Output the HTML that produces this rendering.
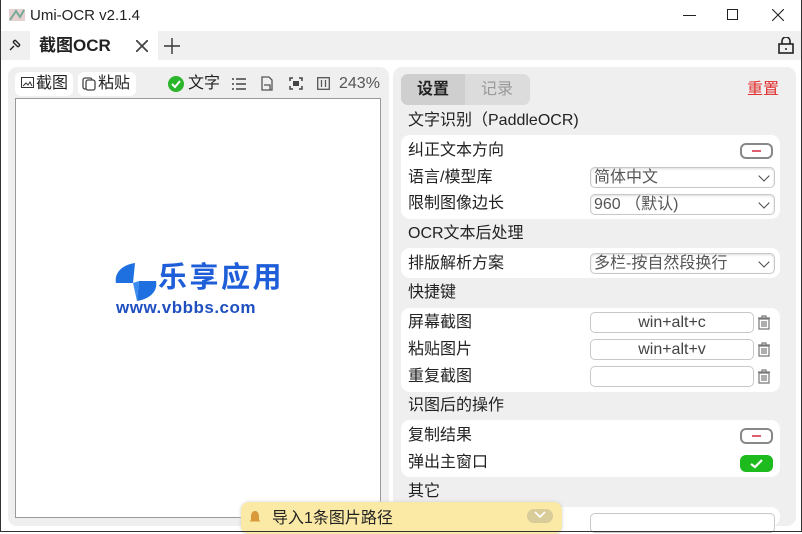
<!DOCTYPE html>
<html><head><meta charset="utf-8"><style>
*{margin:0;padding:0;box-sizing:border-box}
body{width:802px;height:532px;overflow:hidden;background:#fff;font-family:"Liberation Sans","Noto Sans CJK SC",sans-serif;color:#222;position:relative;font-size:16px}
.a{position:absolute}
.t{position:absolute;white-space:nowrap;line-height:20px}
.card{position:absolute;left:401px;width:379px;background:#fff;border-radius:9px}
.sel{position:absolute;left:590px;width:185px;height:21px;border:1px solid #c8c8c8;border-radius:5px;background:#fff;box-shadow:inset 0 1px 2px #ddd;color:#555;padding-left:3px;line-height:19px;font-size:16px}
.sel:after{content:"";position:absolute;right:6px;top:4px;width:7px;height:7px;border-right:1.6px solid #444;border-bottom:1.6px solid #444;transform:rotate(45deg)}
.inp{position:absolute;left:590px;width:164px;height:21px;border:1px solid #c8c8c8;border-radius:5px;background:#fff;text-align:center;color:#444;line-height:19px;font-size:16px}
.sw{position:absolute;left:740px;width:33px;height:16px;border:2px solid #888;border-radius:6px;background:#fff}
.sw:after{content:"";position:absolute;left:10px;top:5px;width:9px;height:2px;background:#e06070}
.trash{position:absolute;left:757px;width:14px;height:15px}
</style></head><body>
<svg class="a" style="left:8px;top:7px" width="18" height="16"><rect x="1" y="2" width="16" height="12" fill="#e7d0d0"/><path d="M2 13 L8 4 L12 10 L16 3" stroke="#7a9" stroke-width="2" fill="none"/></svg>
<div class="t" style="left:30px;top:6px;font-size:15px">Umi-OCR v2.1.4</div>
<div class="a" style="left:683px;top:15px;width:13px;height:1px;background:#222"></div>
<div class="a" style="left:727px;top:9px;width:11px;height:11px;border:1px solid #222"></div>
<svg class="a" style="left:772px;top:9px" width="12" height="12"><path d="M0 0L12 12M12 0L0 12" stroke="#222" stroke-width="1.1"/></svg>
<div class="a" style="left:0;top:31px;width:802px;height:29px;background:#f0f0f0"></div>
<div class="a" style="left:30px;top:31px;width:128px;height:29px;background:#fff"></div>
<svg class="a" style="left:8px;top:38px" width="14" height="14"><path d="M2 12L6 8M5 4L10 9M7 2L12 7M5 4L7 2M10 9L12 7" stroke="#222" stroke-width="1.4" fill="none"/></svg>
<div class="t" style="left:39px;top:36px;font-size:17px;font-weight:bold">截图OCR</div>
<svg class="a" style="left:136px;top:40px" width="12" height="12"><path d="M0 0L12 12M12 0L0 12" stroke="#444" stroke-width="1.8"/></svg>
<svg class="a" style="left:164px;top:38px" width="16" height="16"><path d="M8 0V16M0 8H16" stroke="#333" stroke-width="1.4"/></svg>
<svg class="a" style="left:778px;top:37px" width="16" height="17"><path d="M4 7V4a4 4 0 0 1 8 0v3" stroke="#222" stroke-width="1.6" fill="none"/><rect x="1" y="7" width="14" height="9" stroke="#222" stroke-width="1.6" fill="none"/><circle cx="8" cy="12" r="1" fill="#222"/></svg>
<div class="a" style="left:8px;top:67px;width:381px;height:459px;background:#efefef;border-radius:9px"></div>
<div class="a" style="left:15px;top:72px;width:58px;height:24px;background:#fff;border-radius:6px"></div>
<div class="a" style="left:78px;top:72px;width:58px;height:24px;background:#fff;border-radius:6px"></div>
<svg class="a" style="left:21px;top:77px" width="13" height="12"><rect x="0.5" y="0.5" width="12" height="10" stroke="#333" fill="none"/><path d="M2 9L5 6L7 8L9 5L11 9" stroke="#333" fill="none"/></svg>
<div class="t" style="left:36px;top:74px">截图</div>
<svg class="a" style="left:82px;top:76px" width="14" height="15"><rect x="1" y="2" width="9" height="11" rx="2" stroke="#444" fill="none" stroke-width="1.3"/><rect x="4" y="4" width="9" height="10" rx="2" stroke="#444" fill="#fff" stroke-width="1.3"/></svg>
<div class="t" style="left:98px;top:74px">粘贴</div>
<div class="a" style="left:168px;top:76px;width:16px;height:16px;border-radius:50%;background:#2ab52a"></div>
<svg class="a" style="left:171px;top:79px" width="10" height="10"><path d="M1 5L4 8L9 2" stroke="#fff" stroke-width="2" fill="none"/></svg>
<div class="t" style="left:188px;top:74px">文字</div>
<svg class="a" style="left:232px;top:78px" width="14" height="12"><path d="M0 1H2M4 1H14M0 6H2M4 6H14M0 11H2M4 11H14" stroke="#444" stroke-width="1.5"/></svg>
<svg class="a" style="left:261px;top:76px" width="12" height="15"><path d="M1 1H8L11 4V14H1Z M3 9H9V14" stroke="#555" stroke-width="1.3" fill="none"/></svg>
<svg class="a" style="left:289px;top:77px" width="14" height="13"><path d="M1 4V1H4M10 1H13V4M13 9V12H10M4 12H1V9" stroke="#444" stroke-width="1.5" fill="none"/><rect x="4" y="4" width="6" height="5" fill="#444"/></svg>
<svg class="a" style="left:317px;top:77px" width="13" height="13"><rect x="0.7" y="0.7" width="11.6" height="11.6" stroke="#555" fill="none" stroke-width="1.3"/><path d="M4.5 3V10M8.5 3V10" stroke="#555" stroke-width="1.3"/></svg>
<div class="t" style="left:339px;top:74px;color:#555">243%</div>
<div class="a" style="left:15px;top:98px;width:366px;height:420px;background:#fff;border:1px solid #999"></div>
<svg class="a" style="left:113px;top:262px" width="46" height="40"><path d="M22 1 C8 3 1 12 3 21 L20 21 Z" fill="#1e6fe0"/><path d="M24 39 C38 37 45 28 43 19 L26 19 Z" fill="#1e6fe0"/><path d="M20 21 L26 19 L24 39 Z" fill="#3a8cf0"/></svg>
<div class="t" style="left:158px;top:262px;font-size:29px;line-height:32px;font-weight:bold;color:#1e5ed8;letter-spacing:2.5px">乐享应用</div>
<div class="t" style="left:116px;top:298px;font-size:17px;font-weight:bold;color:#1f4fc0;letter-spacing:0.5px">www.vbbbs.com</div>
<div class="a" style="left:393px;top:67px;width:403px;height:459px;background:#efefef;border-radius:9px"></div>
<div class="a" style="left:401px;top:74px;width:129px;height:31px;background:#dcdcdc;border-radius:7px"></div>
<div class="a" style="left:401px;top:74px;width:64px;height:31px;background:#cfcfcf;border-radius:7px 0 0 7px"></div>
<div class="t" style="left:417px;top:80px;font-weight:bold">设置</div>
<div class="t" style="left:481px;top:80px;color:#999">记录</div>
<div class="t" style="left:747px;top:80px;color:#e03030">重置</div>
<div class="t" style="left:408px;top:111px">文字识别（PaddleOCR)</div>
<div class="card" style="top:135px;height:84px"></div>
<div class="t" style="left:408px;top:141px">纠正文本方向</div>
<div class="sw" style="top:143px"></div>
<div class="t" style="left:408px;top:168px">语言/模型库</div>
<div class="sel" style="top:167px">简体中文</div>
<div class="t" style="left:408px;top:194px">限制图像边长</div>
<div class="sel" style="top:194px">960 （默认)</div>
<div class="t" style="left:408px;top:224px">OCR文本后处理</div>
<div class="card" style="top:248px;height:30px"></div>
<div class="t" style="left:408px;top:254px">排版解析方案</div>
<div class="sel" style="top:253px">多栏-按自然段换行</div>
<div class="t" style="left:408px;top:283px">快捷键</div>
<div class="card" style="top:308px;height:84px"></div>
<div class="t" style="left:408px;top:313px">屏幕截图</div>
<div class="inp" style="top:312px">win+alt+c</div>
<div class="t" style="left:408px;top:340px">粘贴图片</div>
<div class="inp" style="top:339px">win+alt+v</div>
<div class="t" style="left:408px;top:367px">重复截图</div>
<div class="inp" style="top:366px"></div>
<svg class="trash" style="top:315px" viewBox="0 0 14 15"><path d="M1 3H13M5 3V1H9V3M2 4H12V14H2Z M5 6V12M7 6V12M9 6V12" stroke="#777" stroke-width="1.2" fill="none"/></svg>
<svg class="trash" style="top:342px" viewBox="0 0 14 15"><path d="M1 3H13M5 3V1H9V3M2 4H12V14H2Z M5 6V12M7 6V12M9 6V12" stroke="#777" stroke-width="1.2" fill="none"/></svg>
<svg class="trash" style="top:369px" viewBox="0 0 14 15"><path d="M1 3H13M5 3V1H9V3M2 4H12V14H2Z M5 6V12M7 6V12M9 6V12" stroke="#777" stroke-width="1.2" fill="none"/></svg>
<div class="t" style="left:408px;top:396px">识图后的操作</div>
<div class="card" style="top:420px;height:57px"></div>
<div class="t" style="left:408px;top:426px">复制结果</div>
<div class="sw" style="top:428px"></div>
<div class="t" style="left:408px;top:453px">弹出主窗口</div>
<div class="a" style="left:740px;top:455px;width:33px;height:17px;border-radius:6px;background:#1dbb1d"></div>
<svg class="a" style="left:750px;top:458px" width="13" height="11"><path d="M1 6L5 9L12 2" stroke="#fff" stroke-width="2.2" fill="none"/></svg>
<div class="t" style="left:408px;top:482px">其它</div>
<div class="card" style="top:507px;height:19px"></div>
<div class="a" style="left:590px;top:513px;width:185px;height:20px;border:1px solid #c8c8c8;border-radius:5px"></div>
<div class="a" style="left:241px;top:502px;width:321px;height:32px;background:#fbe9a6;border-radius:8px;box-shadow:0 0 3px #ccc"></div>
<svg class="a" style="left:249px;top:510px" width="12" height="14"><path d="M6 1C3 1 2 4 2 7V10L0.5 11.5H11.5L10 10V7C10 4 9 1 6 1Z M4.5 12.5H7.5" fill="#d89a3a"/></svg>
<div class="t" style="left:272px;top:509px;font-size:16px">导入1条图片路径</div>
<div class="a" style="left:527px;top:509px;width:26px;height:14px;border-radius:7px;background:#d8cc98"></div>
<svg class="a" style="left:534px;top:511px" width="12" height="8"><path d="M1 1L6 6L11 1" stroke="#fff" stroke-width="1.8" fill="none"/></svg>
<div class="a" style="left:0;top:0;width:802px;height:532px;border:1px solid #333;border-top:none;pointer-events:none"></div>
</body></html>
